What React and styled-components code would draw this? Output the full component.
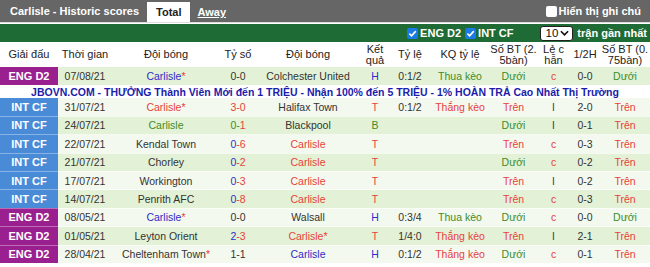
import React from "react";
import styled, { createGlobalStyle } from "styled-components";

const GlobalStyle = createGlobalStyle`
  html, body { margin: 0; padding: 0; background: #fff; }
  body { font-family: "Liberation Sans", Arial, sans-serif; }
`;

const RED = "#e8413c";
const GREEN = "#3c8c2c";
const BLUE = "#2c2cc8";
const DARK = "#333";

const matches = [
  { lg: "ENG D2", date: "07/08/21", home: ["Carlisle", BLUE, true], score: [["0-0", DARK]], away: ["Colchester United", DARK], res: ["H", BLUE], hc: "0:1/2", hcr: ["Thua kèo", GREEN], ou: ["Dưới", GREEN], oe: ["c", RED], ht: "0-0", ou2: ["Dưới", GREEN] },
  { ad: true },
  { lg: "INT CF", date: "31/07/21", home: ["Carlisle", RED, true, true], score: [["3-0", RED]], away: ["Halifax Town", DARK], res: ["T", RED], hc: "0:1/2", hcr: ["Thắng kèo", RED], ou: ["Trên", RED], oe: ["l", DARK], ht: "2-0", ou2: ["Trên", RED] },
  { lg: "INT CF", date: "24/07/21", home: ["Carlisle", GREEN], score: [["0-", GREEN], ["1", RED]], away: ["Blackpool", DARK], res: ["B", GREEN], hc: "", hcr: ["", DARK], ou: ["Dưới", GREEN], oe: ["l", DARK], ht: "0-1", ou2: ["Trên", RED] },
  { lg: "INT CF", date: "22/07/21", home: ["Kendal Town", DARK], score: [["0", BLUE], ["-6", RED]], away: ["Carlisle", RED], res: ["T", RED], hc: "", hcr: ["", DARK], ou: ["Trên", RED], oe: ["c", RED], ht: "0-3", ou2: ["Trên", RED] },
  { lg: "INT CF", date: "21/07/21", home: ["Chorley", DARK], score: [["0", BLUE], ["-2", RED]], away: ["Carlisle", RED], res: ["T", RED], hc: "", hcr: ["", DARK], ou: ["Dưới", GREEN], oe: ["c", RED], ht: "0-2", ou2: ["Trên", RED] },
  { lg: "INT CF", date: "17/07/21", home: ["Workington", DARK], score: [["0", BLUE], ["-3", RED]], away: ["Carlisle", RED], res: ["T", RED], hc: "", hcr: ["", DARK], ou: ["Trên", RED], oe: ["l", DARK], ht: "0-2", ou2: ["Trên", RED] },
  { lg: "INT CF", date: "14/07/21", home: ["Penrith AFC", DARK], score: [["0", BLUE], ["-8", RED]], away: ["Carlisle", RED], res: ["T", RED], hc: "", hcr: ["", DARK], ou: ["Trên", RED], oe: ["c", RED], ht: "0-3", ou2: ["Trên", RED] },
  { lg: "ENG D2", date: "08/05/21", home: ["Carlisle", BLUE, true], score: [["0-0", DARK]], away: ["Walsall", DARK], res: ["H", BLUE], hc: "0:3/4", hcr: ["Thua kèo", GREEN], ou: ["Dưới", GREEN], oe: ["c", RED], ht: "0-0", ou2: ["Dưới", GREEN] },
  { lg: "ENG D2", date: "01/05/21", home: ["Leyton Orient", DARK], score: [["2", BLUE], ["-3", RED]], away: ["Carlisle", RED, true, true], res: ["T", RED], hc: "1/4:0", hcr: ["Thắng kèo", RED], ou: ["Trên", RED], oe: ["l", DARK], ht: "2-1", ou2: ["Trên", RED] },
  { lg: "ENG D2", date: "28/04/21", home: ["Cheltenham Town", DARK, true], score: [["1-1", DARK]], away: ["Carlisle", BLUE], res: ["H", BLUE], hc: "0:1/2", hcr: ["Thắng kèo", RED], ou: ["Dưới", GREEN], oe: ["c", RED], ht: "0-1", ou2: ["Trên", RED] },
];

const widths = [58, 54, 108, 36, 104, 30, 40, 60, 47, 33, 30, 50];

const Team = ({ t }) => (
  <Cell $color={t[1]}>
    {t[0]}
    {t[2] && <Star $full={t[3]}>*</Star>}
  </Cell>
);

const Tick = () => (
  <svg width="9" height="9" viewBox="0 0 10 10">
    <path d="M1.5 5.2 L4 7.6 L8.6 2.4" fill="none" stroke="#fff" strokeWidth="1.8" />
  </svg>
);

export default function App() {
  let n = 0;
  return (
    <>
      <GlobalStyle />
      <Page>
        <TitleBar>
          <Title>Carlisle - Historic scores</Title>
          <Tab $active>Total</Tab>
          <Tab>Away</Tab>
          <Spacer />
          <Check>
            <Box />
            Hiển thị ghi chú
          </Check>
        </TitleBar>
        <FilterBar>
          <Check>
            <Box $checked>
              <Tick />
            </Box>
            ENG D2
          </Check>
          <Check>
            <Box $checked>
              <Tick />
            </Box>
            INT CF
          </Check>
          <Select>
            10
            <svg width="9" height="6" viewBox="0 0 10 6">
              <path d="M1 1 L5 5 L9 1" fill="none" stroke="#111" strokeWidth="1.8" />
            </svg>
          </Select>
          <FilterLabel>trận gần nhất</FilterLabel>
        </FilterBar>
        <Table>
          <colgroup>
            {widths.map((w, i) => (
              <col key={i} style={{ width: w }} />
            ))}
          </colgroup>
          <thead>
            <tr>
              <Head>Giải đấu</Head>
              <Head>Thời gian</Head>
              <Head>Đội bóng</Head>
              <Head>Tỷ số</Head>
              <Head>Đội bóng</Head>
              <Head>Kết<br />quả</Head>
              <Head>Tỷ lệ</Head>
              <Head>KQ tỷ lệ</Head>
              <Head>Số BT (2.<br />5bàn)</Head>
              <Head>Lẻ c<br />hẫn</Head>
              <Head>1/2H</Head>
              <Head>Số BT (0.<br />75bàn)</Head>
            </tr>
          </thead>
          <tbody>
            {matches.map((m, i) => {
              if (m.ad)
                return (
                  <AdRow key={i}>
                    <AdCell colSpan={12}>
                      JBOVN.COM - THƯỞNG Thành Viên Mới đến 1 TRIỆU - Nhận 100% đến 5 TRIỆU - 1% HOÀN TRẢ Cao Nhất Thị Trường
                    </AdCell>
                  </AdRow>
                );
              const alt = n++ % 2 === 1;
              return (
                <Row key={i} $alt={alt}>
                  <League $eng={m.lg === "ENG D2"}>{m.lg}</League>
                  <Cell>{m.date}</Cell>
                  <Team t={m.home} />
                  <Cell>
                    {m.score.map((s, j) => (
                      <Part key={j} $color={s[1]}>{s[0]}</Part>
                    ))}
                  </Cell>
                  <Team t={m.away} />
                  <Cell $color={m.res[1]}>{m.res[0]}</Cell>
                  <Cell>{m.hc}</Cell>
                  <Cell $color={m.hcr[1]}>{m.hcr[0]}</Cell>
                  <Cell $color={m.ou[1]}>{m.ou[0]}</Cell>
                  <Cell $color={m.oe[1]}>{m.oe[0]}</Cell>
                  <Cell>{m.ht}</Cell>
                  <Cell $color={m.ou2[1]}>{m.ou2[0]}</Cell>
                </Row>
              );
            })}
          </tbody>
        </Table>
      </Page>
    </>
  );
}

const Page = styled.div`
  width: 650px;
  height: 267px;
  overflow: hidden;
  background: #fff;
`;

const TitleBar = styled.div`
  display: flex;
  align-items: flex-end;
  height: 23px;
  background: #666;
  padding: 0 9px 0 10px;
  border-bottom: 1px solid #ddd;
  box-sizing: border-box;
`;

const Title = styled.div`
  color: #fff;
  font-weight: bold;
  font-size: 11px;
  line-height: 22px;
  margin-right: 8px;
`;

const Tab = styled.div`
  height: 20px;
  line-height: 20px;
  padding: 0 ${p => (p.$active ? "9px" : "7px")};
  font-size: 11px;
  font-weight: bold;
  background: ${p => (p.$active ? "#fff" : "transparent")};
  color: ${p => (p.$active ? "#222" : "#fff")};
  text-decoration: ${p => (p.$active ? "none" : "underline")};
`;

const Spacer = styled.div`
  flex: 1;
`;

const Check = styled.div`
  display: flex;
  align-items: center;
  gap: 2px;
  color: #fff;
  font-weight: bold;
  font-size: 11px;
  line-height: 20px;
  align-self: center;
`;

const Box = styled.span`
  width: 11px;
  height: 11px;
  border-radius: 2px;
  background: ${p => (p.$checked ? "#1a7ae6" : "#fff")};
  display: inline-flex;
  align-items: center;
  justify-content: center;
  box-sizing: border-box;
`;

const FilterBar = styled.div`
  height: 18px;
  margin-top: 1px;
  background: #1f6b35;
  display: flex;
  align-items: center;
  justify-content: flex-end;
  gap: 4px;
  padding-right: 3px;
`;

const Select = styled.div`
  display: flex;
  align-items: center;
  gap: 2px;
  height: 15px;
  padding: 0 3px 0 5px;
  margin-left: 22px;
  border: 1px solid #222;
  border-radius: 3px;
  background: #fff;
  font-size: 11.5px;
  color: #111;
  box-sizing: border-box;
`;

const FilterLabel = styled.div`
  color: #fff;
  font-weight: bold;
  font-size: 11px;
`;

const Table = styled.table`
  width: 650px;
  table-layout: fixed;
  border-collapse: collapse;
  font-size: 10.5px;
`;

const Head = styled.th`
  height: 25px;
  padding: 0;
  font-weight: normal;
  font-size: 11px;
  line-height: 11px;
  color: #222;
  text-align: center;
  white-space: nowrap;
  vertical-align: middle;
`;

const Row = styled.tr`
  height: 18.4px;
  background: ${p => (p.$alt ? "#f3f9ee" : "#e3f2d6")};
`;

const Cell = styled.td`
  padding: 0;
  text-align: center;
  white-space: nowrap;
  color: ${p => p.$color || "#333"};
  font-size: 10.5px;
  border-bottom: 1px solid rgba(255, 255, 255, 0.6);
`;

const League = styled.td`
  padding: 0;
  text-align: center;
  white-space: nowrap;
  color: #fff;
  font-weight: bold;
  font-size: 11px;
  background: ${p => (p.$eng ? "#9a2090" : "#4a8bd8")};
  border-bottom: 1px solid rgba(255, 255, 255, 0.35);
`;

const Part = styled.span`
  color: ${p => p.$color};
`;

const Star = styled.span`
  color: ${p => (p.$full ? "inherit" : RED)};
`;

const AdRow = styled.tr`
  height: 12px;
  background: #fff;
`;

const AdCell = styled.td`
  padding: 0;
  text-align: center;
  white-space: nowrap;
  color: #1c1caa;
  font-weight: bold;
  font-size: 10.5px;
  line-height: 12px;
`;
